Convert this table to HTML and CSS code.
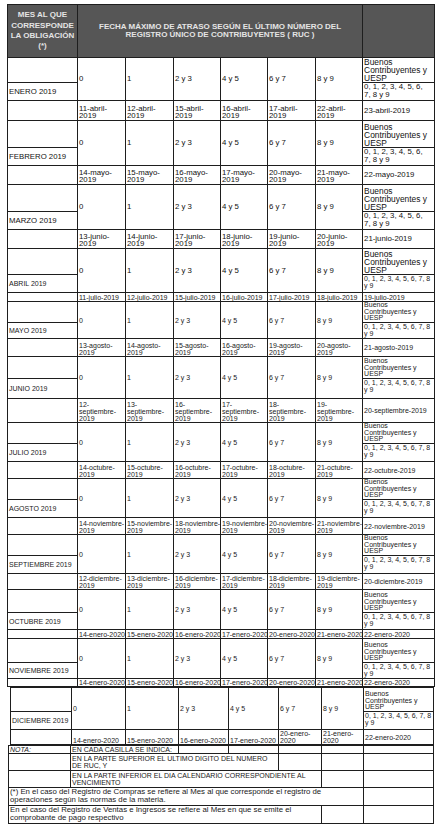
FILE: index.html
```html
<!DOCTYPE html>
<html lang="es">
<head>
<meta charset="utf-8">
<title>Cronograma de atraso</title>
<link rel="stylesheet" href="styles.css">
</head>
<body>
<table class="main">
  <colgroup>
    <col class="c0"><col class="c48"><col class="c48"><col class="c47"><col class="c47"><col class="c48"><col class="c47"><col class="c72">
  </colgroup>
  <tr class="hd">
    <td class="hmes">MES AL QUE<br>CORRESPONDE<br>LA OBLIGACIÓN<br>(*)</td>
    <td colspan="6" class="hfecha">FECHA MÁXIMO DE ATRASO SEGÚN EL ÚLTIMO NÚMERO DEL<br>REGISTRO ÚNICO DE CONTRIBUYENTES ( RUC )</td>
    <td></td>
  </tr>

  <!-- ENERO -->
  <tr class="big h25">
    <td></td>
    <td rowspan="2">0</td><td rowspan="2">1</td><td rowspan="2">2 y 3</td><td rowspan="2">4 y 5</td><td rowspan="2">6 y 7</td><td rowspan="2">8 y 9</td>
    <td class="bc">Buenos<br>Contribuyentes y<br>UESP</td>
  </tr>
  <tr class="big h18">
    <td>ENERO 2019</td>
    <td class="dl">0, 1, 2, 3, 4, 5, 6,<br>7, 8 y 9</td>
  </tr>
  <tr class="big h20 dr">
    <td></td>
    <td>11-abril-<br>2019</td><td>12-abril-<br>2019</td><td>15-abril-<br>2019</td><td>16-abril-<br>2019</td><td>17-abril-<br>2019</td><td>22-abril-<br>2019</td>
    <td class="last">23-abril-2019</td>
  </tr>

  <!-- FEBRERO -->
  <tr class="big h27">
    <td></td>
    <td rowspan="2">0</td><td rowspan="2">1</td><td rowspan="2">2 y 3</td><td rowspan="2">4 y 5</td><td rowspan="2">6 y 7</td><td rowspan="2">8 y 9</td>
    <td class="bc">Buenos<br>Contribuyentes y<br>UESP</td>
  </tr>
  <tr class="big h18">
    <td>FEBRERO 2019</td>
    <td class="dl">0, 1, 2, 3, 4, 5, 6,<br>7, 8 y 9</td>
  </tr>
  <tr class="big h19 dr">
    <td></td>
    <td>14-mayo-<br>2019</td><td>15-mayo-<br>2019</td><td>16-mayo-<br>2019</td><td>17-mayo-<br>2019</td><td>20-mayo-<br>2019</td><td>21-mayo-<br>2019</td>
    <td class="last">22-mayo-2019</td>
  </tr>

  <!-- MARZO -->
  <tr class="big h27">
    <td></td>
    <td rowspan="2">0</td><td rowspan="2">1</td><td rowspan="2">2 y 3</td><td rowspan="2">4 y 5</td><td rowspan="2">6 y 7</td><td rowspan="2">8 y 9</td>
    <td class="bc">Buenos<br>Contribuyentes y<br>UESP</td>
  </tr>
  <tr class="big h18">
    <td>MARZO 2019</td>
    <td class="dl">0, 1, 2, 3, 4, 5, 6,<br>7, 8 y 9</td>
  </tr>
  <tr class="big h19 dr">
    <td></td>
    <td>13-junio-<br>2019</td><td>14-junio-<br>2019</td><td>17-junio-<br>2019</td><td>18-junio-<br>2019</td><td>19-junio-<br>2019</td><td>20-junio-<br>2019</td>
    <td class="last">21-junio-2019</td>
  </tr>

  <!-- ABRIL -->
  <tr class="big h26">
    <td></td>
    <td rowspan="2">0</td><td rowspan="2">1</td><td rowspan="2">2 y 3</td><td rowspan="2">4 y 5</td><td rowspan="2">6 y 7</td><td rowspan="2">8 y 9</td>
    <td class="bc">Buenos<br>Contribuyentes y<br>UESP</td>
  </tr>
  <tr class="h18">
    <td>ABRIL 2019</td>
    <td class="dl">0, 1, 2, 3, 4, 5, 6, 7, 8<br>y 9</td>
  </tr>
  <tr class="h9 dr">
    <td></td>
    <td>11-julio-2019</td><td>12-julio-2019</td><td>15-julio-2019</td><td>16-julio-2019</td><td>17-julio-2019</td><td>18-julio-2019</td>
    <td class="last">19-julio-2019</td>
  </tr>

  <!-- MAYO -->
  <tr class="h21">
    <td></td>
    <td rowspan="2">0</td><td rowspan="2">1</td><td rowspan="2">2 y 3</td><td rowspan="2">4 y 5</td><td rowspan="2">6 y 7</td><td rowspan="2">8 y 9</td>
    <td class="bc">Buenos<br>Contribuyentes y<br>UESP</td>
  </tr>
  <tr class="h16">
    <td>MAYO 2019</td>
    <td class="dl">0, 1, 2, 3, 4, 5, 6, 7, 8<br>y 9</td>
  </tr>
  <tr class="h18 dr">
    <td></td>
    <td>13-agosto-<br>2019</td><td>14-agosto-<br>2019</td><td>15-agosto-<br>2019</td><td>16-agosto-<br>2019</td><td>19-agosto-<br>2019</td><td>20-agosto-<br>2019</td>
    <td class="last">21-agosto-2019</td>
  </tr>

  <!-- JUNIO -->
  <tr class="h22">
    <td></td>
    <td rowspan="2">0</td><td rowspan="2">1</td><td rowspan="2">2 y 3</td><td rowspan="2">4 y 5</td><td rowspan="2">6 y 7</td><td rowspan="2">8 y 9</td>
    <td class="bc">Buenos<br>Contribuyentes y<br>UESP</td>
  </tr>
  <tr class="h20">
    <td>JUNIO 2019</td>
    <td class="dl">0, 1, 2, 3, 4, 5, 6, 7, 8<br>y 9</td>
  </tr>
  <tr class="h24 dr">
    <td></td>
    <td>12-<br>septiembre-<br>2019</td><td>13-<br>septiembre-<br>2019</td><td>16-<br>septiembre-<br>2019</td><td>17-<br>septiembre-<br>2019</td><td>18-<br>septiembre-<br>2019</td><td>19-<br>septiembre-<br>2019</td>
    <td class="last">20-septiembre-2019</td>
  </tr>

  <!-- JULIO -->
  <tr class="h21">
    <td></td>
    <td rowspan="2">0</td><td rowspan="2">1</td><td rowspan="2">2 y 3</td><td rowspan="2">4 y 5</td><td rowspan="2">6 y 7</td><td rowspan="2">8 y 9</td>
    <td class="bc">Buenos<br>Contribuyentes y<br>UESP</td>
  </tr>
  <tr class="h18">
    <td>JULIO 2019</td>
    <td class="dl">0, 1, 2, 3, 4, 5, 6, 7, 8<br>y 9</td>
  </tr>
  <tr class="h17 dr">
    <td></td>
    <td>14-octubre-<br>2019</td><td>15-octubre-<br>2019</td><td>16-octubre-<br>2019</td><td>17-octubre-<br>2019</td><td>18-octubre-<br>2019</td><td>21-octubre-<br>2019</td>
    <td class="last">22-octubre-2019</td>
  </tr>

  <!-- AGOSTO -->
  <tr class="h21">
    <td></td>
    <td rowspan="2">0</td><td rowspan="2">1</td><td rowspan="2">2 y 3</td><td rowspan="2">4 y 5</td><td rowspan="2">6 y 7</td><td rowspan="2">8 y 9</td>
    <td class="bc">Buenos<br>Contribuyentes y<br>UESP</td>
  </tr>
  <tr class="h18">
    <td>AGOSTO 2019</td>
    <td class="dl">0, 1, 2, 3, 4, 5, 6, 7, 8<br>y 9</td>
  </tr>
  <tr class="h17 dr">
    <td></td>
    <td>14-noviembre-<br>2019</td><td>15-noviembre-<br>2019</td><td>18-noviembre-<br>2019</td><td>19-noviembre-<br>2019</td><td>20-noviembre-<br>2019</td><td>21-noviembre-<br>2019</td>
    <td class="last">22-noviembre-2019</td>
  </tr>

  <!-- SEPTIEMBRE -->
  <tr class="h21">
    <td></td>
    <td rowspan="2">0</td><td rowspan="2">1</td><td rowspan="2">2 y 3</td><td rowspan="2">4 y 5</td><td rowspan="2">6 y 7</td><td rowspan="2">8 y 9</td>
    <td class="bc">Buenos<br>Contribuyentes y<br>UESP</td>
  </tr>
  <tr class="h18">
    <td>SEPTIEMBRE 2019</td>
    <td class="dl">0, 1, 2, 3, 4, 5, 6, 7, 8<br>y 9</td>
  </tr>
  <tr class="h16 dr">
    <td></td>
    <td>12-diciembre-<br>2019</td><td>13-diciembre-<br>2019</td><td>16-diciembre-<br>2019</td><td>17-diciembre-<br>2019</td><td>18-diciembre-<br>2019</td><td>19-diciembre-<br>2019</td>
    <td class="last">20-diciembre-2019</td>
  </tr>

  <!-- OCTUBRE -->
  <tr class="h23">
    <td></td>
    <td rowspan="2">0</td><td rowspan="2">1</td><td rowspan="2">2 y 3</td><td rowspan="2">4 y 5</td><td rowspan="2">6 y 7</td><td rowspan="2">8 y 9</td>
    <td class="bc">Buenos<br>Contribuyentes y<br>UESP</td>
  </tr>
  <tr class="h17">
    <td>OCTUBRE 2019</td>
    <td class="dl">0, 1, 2, 3, 4, 5, 6, 7, 8<br>y 9</td>
  </tr>
  <tr class="h9 dr">
    <td></td>
    <td>14-enero-2020</td><td>15-enero-2020</td><td>16-enero-2020</td><td>17-enero-2020</td><td>20-enero-2020</td><td>21-enero-2020</td>
    <td class="last">22-enero-2020</td>
  </tr>

  <!-- NOVIEMBRE -->
  <tr class="h24">
    <td></td>
    <td rowspan="2">0</td><td rowspan="2">1</td><td rowspan="2">2 y 3</td><td rowspan="2">4 y 5</td><td rowspan="2">6 y 7</td><td rowspan="2">8 y 9</td>
    <td class="bc">Buenos<br>Contribuyentes y<br>UESP</td>
  </tr>
  <tr class="h16">
    <td>NOVIEMBRE 2019</td>
    <td class="dl">0, 1, 2, 3, 4, 5, 6, 7, 8<br>y 9</td>
  </tr>
  <tr class="h8 dr">
    <td></td>
    <td>14-enero-2020</td><td>15-enero-2020</td><td>16-enero-2020</td><td>17-enero-2020</td><td>20-enero-2020</td><td>21-enero-2020</td>
    <td class="last">22-enero-2020</td>
  </tr>
</table>

<table class="dic">
  <colgroup>
    <col class="d0"><col class="d54"><col class="d53"><col class="d50"><col class="d50"><col class="d43"><col class="d42"><col class="d70">
  </colgroup>
  <tr class="h24">
    <td></td>
    <td rowspan="2">0</td><td rowspan="2">1</td><td rowspan="2">2 y 3</td><td rowspan="2">4 y 5</td><td rowspan="2">6 y 7</td><td rowspan="2">8 y 9</td>
    <td class="bc">Buenos<br>Contribuyentes y<br>UESP</td>
  </tr>
  <tr class="h18">
    <td>DICIEMBRE 2019</td>
    <td class="dl">0, 1, 2, 3, 4, 5, 6, 7, 8<br>y 9</td>
  </tr>
  <tr class="h14 dr">
    <td></td>
    <td>14-enero-2020</td><td>15-enero-2020</td><td>16-enero-2020</td><td>17-enero-2020</td><td>20-enero-<br>2020</td><td>21-enero-<br>2020</td>
    <td class="last">22-enero-2020</td>
  </tr>
</table>

<table class="nota">
  <colgroup>
    <col class="n0"><col class="d55"><col class="d53"><col class="d50"><col class="d50"><col class="d43"><col class="d42"><col class="d70">
  </colgroup>
  <tr class="h8">
    <td class="it">NOTA:</td>
    <td colspan="2">EN CADA CASILLA SE INDICA:</td>
    <td></td><td></td><td></td><td></td><td></td>
  </tr>
  <tr class="h17">
    <td></td>
    <td colspan="4">EN LA PARTE SUPERIOR EL ULTIMO DIGITO DEL NUMERO<br>DE RUC, Y</td>
    <td></td><td></td><td></td>
  </tr>
  <tr class="h17">
    <td></td>
    <td colspan="5">EN LA PARTE INFERIOR EL DIA CALENDARIO CORRESPONDIENTE AL<br>VENCIMIENTO</td>
    <td></td><td></td>
  </tr>
  <tr class="h18 txt">
    <td colspan="7">(*) En el caso del Registro de Compras se refiere al Mes al que corresponde el registro de<br>operaciones según las normas de la materia.</td>
    <td></td>
  </tr>
  <tr class="h18 txt">
    <td colspan="6">En el caso del Registro de Ventas e Ingresos se refiere al Mes en que se emite el<br>comprobante de pago respectivo</td>
    <td></td><td></td>
  </tr>
</table>
</body>
</html>
```

FILE: styles.css
```css
html, body {
  margin: 0;
  padding: 0;
  background: #ffffff;
}

body {
  padding-top: 4px;
  font-family: "Liberation Sans", Arial, sans-serif;
  color: #1a1a1a;
}

table {
  border-collapse: collapse;
  table-layout: fixed;
}

td {
  border: 1px solid #1e1e1e;
  padding: 0 0 0 1px;
  font-size: 7px;
  line-height: 7px;
  vertical-align: middle;
  white-space: nowrap;
  text-align: left;
}

/* main table */
.main {
  margin-left: 7px;
  width: 427px;
}
.c0 { width: 70px; }
.c48 { width: 48px; }
.c47 { width: 47px; }
.c72 { width: 72px; }

.hd td {
  background: #565656;
  color: #e4e4e4;
  font-weight: bold;
  font-size: 8px;
  text-align: center;
  height: 52px;
  padding: 0;
}
.hmes { line-height: 10.3px; }
.hfecha { line-height: 8.4px; }

.big td {
  font-size: 7.8px;
  line-height: 7.6px;
  color: #111;
}
.bc {
  vertical-align: bottom;
  line-height: 6.6px;
}
.big .bc {
  font-size: 8.4px;
  line-height: 8px;
}
.dl {
  vertical-align: top;
}
.dr td {
  vertical-align: bottom;
}
.dr .last {
  vertical-align: middle;
}

.h8 { height: 8px; }
.h9 { height: 9px; }
.h14 { height: 14px; }
.h16 { height: 16px; }
.h17 { height: 17px; }
.h18 { height: 18px; }
.h19 { height: 19px; }
.h20 { height: 20px; }
.h21 { height: 21px; }
.h22 { height: 22px; }
.h23 { height: 23px; }
.h24 { height: 24px; }
.h25 { height: 25px; }
.h26 { height: 26px; }
.h27 { height: 27px; }

/* diciembre table */
.dic {
  margin-left: 10px;
  width: 423px;
}
.d0 { width: 61px; }
.d55 { width: 55px; }
.d54 { width: 54px; }
.d53 { width: 53px; }
.d50 { width: 50px; }
.d43 { width: 43px; }
.d42 { width: 42px; }
.d70 { width: 70px; }

/* nota table */
.nota {
  margin-left: 8px;
  width: 425px;
}
.n0 { width: 62px; }
.it {
  font-style: italic;
  text-decoration: underline;
}
.txt td {
  font-size: 7.8px;
  line-height: 8px;
  vertical-align: top;
}
```
